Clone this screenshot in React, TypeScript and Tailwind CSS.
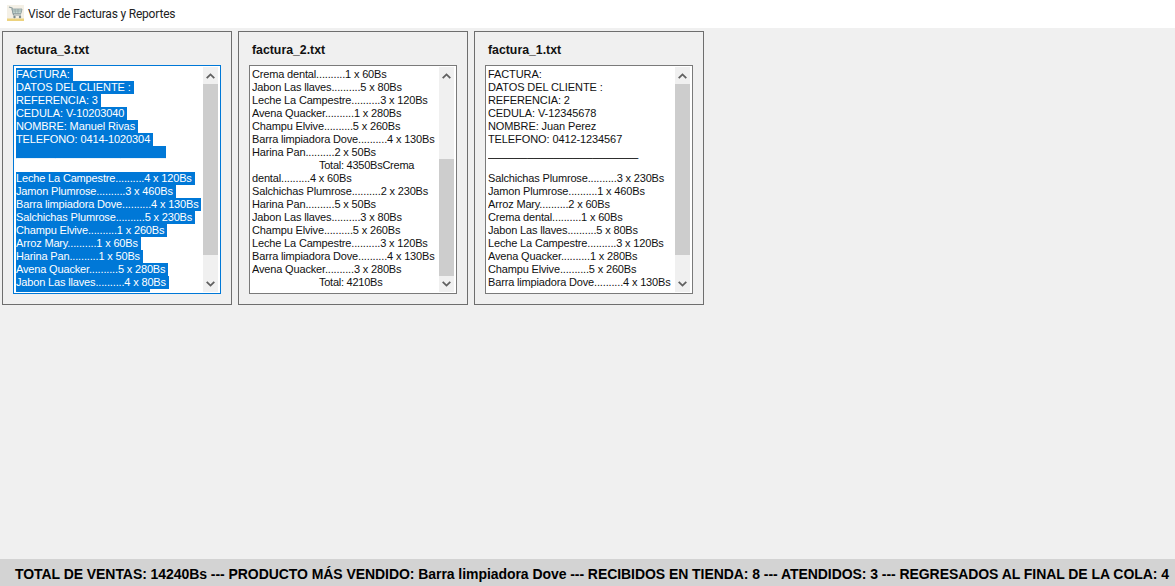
const factura3 = [
  'FACTURA: ',
  'DATOS DEL CLIENTE : ',
  'REFERENCIA: 3 ',
  'CEDULA: V-10203040 ',
  'NOMBRE: Manuel Rivas ',
  'TELEFONO: 0414-1020304 ',
  '_______________________',
  '',
  'Leche La Campestre..........4 x 120Bs ',
  'Jamon Plumrose..........3 x 460Bs ',
  'Barra limpiadora Dove..........4 x 130Bs ',
  'Salchichas Plumrose..........5 x 230Bs ',
  'Champu Elvive..........1 x 260Bs ',
  'Arroz Mary..........1 x 60Bs ',
  'Harina Pan..........1 x 50Bs ',
  'Avena Quacker..........5 x 280Bs ',
  'Jabon Las llaves..........4 x 80Bs ',
]

const factura2 = [
  'Crema dental..........1 x 60Bs',
  'Jabon Las llaves..........5 x 80Bs',
  'Leche La Campestre..........3 x 120Bs',
  'Avena Quacker..........1 x 280Bs',
  'Champu Elvive..........5 x 260Bs',
  'Barra limpiadora Dove..........4 x 130Bs',
  'Harina Pan..........2 x 50Bs',
  '\t\t\tTotal: 4350BsCrema',
  'dental..........4 x 60Bs',
  'Salchichas Plumrose..........2 x 230Bs',
  'Harina Pan..........5 x 50Bs',
  'Jabon Las llaves..........3 x 80Bs',
  'Champu Elvive..........5 x 260Bs',
  'Leche La Campestre..........3 x 120Bs',
  'Barra limpiadora Dove..........4 x 130Bs',
  'Avena Quacker..........3 x 280Bs',
  '\t\t\tTotal: 4210Bs',
]

const factura1 = [
  'FACTURA:',
  'DATOS DEL CLIENTE :',
  'REFERENCIA: 2',
  'CEDULA: V-12345678',
  'NOMBRE: Juan Perez',
  'TELEFONO: 0412-1234567',
  '_______________________',
  '',
  'Salchichas Plumrose..........3 x 230Bs',
  'Jamon Plumrose..........1 x 460Bs',
  'Arroz Mary..........2 x 60Bs',
  'Crema dental..........1 x 60Bs',
  'Jabon Las llaves..........5 x 80Bs',
  'Leche La Campestre..........3 x 120Bs',
  'Avena Quacker..........1 x 280Bs',
  'Champu Elvive..........5 x 260Bs',
  'Barra limpiadora Dove..........4 x 130Bs',
]

function Line({ text, selected }: { text: string; selected: boolean }) {
  const sel = selected ? 'bg-[#0078d7] text-white' : ''
  const box = `inline-block h-[13px] align-top ${sel}`

  if (text === '') return <div className="h-[13px]" />

  // la regla de guiones bajos
  if (text.startsWith('___')) {
    return (
      <div className="h-[13px] whitespace-pre text-[12px] tracking-[-0.15px]">
        <span className={box}>{text}</span>
      </div>
    )
  }

  if (text.startsWith('\t')) {
    return (
      <div className="h-[13px] whitespace-pre pl-[67px] tracking-[-0.25px]">
        <span className={box}>{text.trim()}</span>
      </div>
    )
  }

  return (
    <div className={`h-[13px] whitespace-pre ${text.includes('..........') ? 'tracking-[-0.16px]' : 'tracking-[-0.1px]'}`}>
      <span className={box}>{text}</span>
    </div>
  )
}

function Scrollbar({ offset, thumb }: { offset: string; thumb: string }) {
  return (
    <div className="w-[15px] flex flex-col bg-[#f0f0f0] shrink-0">
      <div className="h-[17px] flex items-center justify-center shrink-0">
        <svg width="9" height="6" viewBox="0 0 9 6" fill="none" stroke="#606060" strokeWidth="1.8">
          <path d="M0.7 5.2 L4.5 1.4 L8.3 5.2" />
        </svg>
      </div>
      <div className="flex-1 min-h-0">
        <div className={`bg-[#cdcdcd] ${offset} ${thumb}`} />
      </div>
      <div className="h-[17px] flex items-center justify-center shrink-0">
        <svg width="9" height="6" viewBox="0 0 9 6" fill="none" stroke="#606060" strokeWidth="1.8">
          <path d="M0.7 0.8 L4.5 4.6 L8.3 0.8" />
        </svg>
      </div>
    </div>
  )
}

function Panel({
  title,
  lines,
  focused,
  offset,
  thumb,
}: {
  title: string
  lines: string[]
  focused: boolean
  offset: string
  thumb: string
}) {
  return (
    <div className="w-[230px] h-[274px] border border-[#6e6e6e] pl-[10px] pr-[10px] pt-[10px] flex flex-col shrink-0">
      <h2 className="h-[23px] pl-[3px] text-[12.3px] leading-[17px] font-bold text-[#111]">{title}</h2>
      <div className={`w-[208px] h-[229px] border bg-white flex pl-[2px] pr-[2px] py-[1px] ${focused ? 'border-[#0078d7]' : 'border-[#7a7a7a]'}`}>
        <div className="flex-1 min-w-0 overflow-hidden pt-[1px] text-[11px] leading-[13px] text-[#111]">
          {lines.map((text, i) => (
            <Line key={i} text={text} selected={focused} />
          ))}
          {focused && <div className="h-[3px] w-[134px] bg-[#0078d7]" />}
        </div>
        <Scrollbar offset={offset} thumb={thumb} />
      </div>
    </div>
  )
}

export default function App() {
  return (
    <div className="w-[1175px] h-[586px] overflow-hidden flex flex-col bg-[#f0f0f0] font-['Liberation_Sans',Arial,sans-serif]">
      <header className="h-[28px] bg-white flex items-center pl-[7px] shrink-0">
        <svg width="17" height="16" viewBox="0 0 17 16" className="mr-[4px] -mt-[2px]">
          <rect x="0" y="0" width="17" height="14" fill="#f4f0e6" />
          <rect x="0" y="13.5" width="17" height="2.5" fill="#ecd27e" />
          <path d="M2 2 L5 3 L6.5 10 L14 10" fill="none" stroke="#8a9a9c" strokeWidth="1.2" />
          <path d="M5 4 L15 4 L14 8.5 L6 8.5 Z" fill="#c3d6d1" stroke="#8a9a9c" strokeWidth="0.8" />
          <path d="M8 4 L8.4 8.5 M11 4 L11 8.5 M5.4 6 L14.6 6" stroke="#8a9a9c" strokeWidth="0.6" />
          <circle cx="7.5" cy="12" r="1.2" fill="#7a8a8c" />
          <circle cx="13" cy="12" r="1.2" fill="#7a8a8c" />
        </svg>
        <span className="text-[12px] tracking-[-0.2px] text-[#222] font-['Roboto',sans-serif]">Visor de Facturas y Reportes</span>
      </header>

      <main className="flex-1 min-h-0 flex items-start gap-[6px] pt-[3px] pl-[2px]">
        <Panel title="factura_3.txt" lines={factura3} focused offset="mt-0" thumb="h-[171px]" />
        <Panel title="factura_2.txt" lines={factura2} focused={false} offset="mt-[75px]" thumb="h-[117px]" />
        <Panel title="factura_1.txt" lines={factura1} focused={false} offset="mt-0" thumb="h-[171px]" />
      </main>

      <footer className="h-[27px] bg-[#d3d3d3] flex items-center pl-[15px] pt-[3px] shrink-0 whitespace-nowrap">
        <span className="text-[14px] tracking-[-0.06px] font-bold text-black">
          TOTAL DE VENTAS: 14240Bs --- PRODUCTO MÁS VENDIDO: Barra limpiadora Dove --- RECIBIDOS EN TIENDA: 8 --- ATENDIDOS: 3 --- REGRESADOS AL FINAL DE LA COLA: 4
        </span>
      </footer>
    </div>
  )
}
